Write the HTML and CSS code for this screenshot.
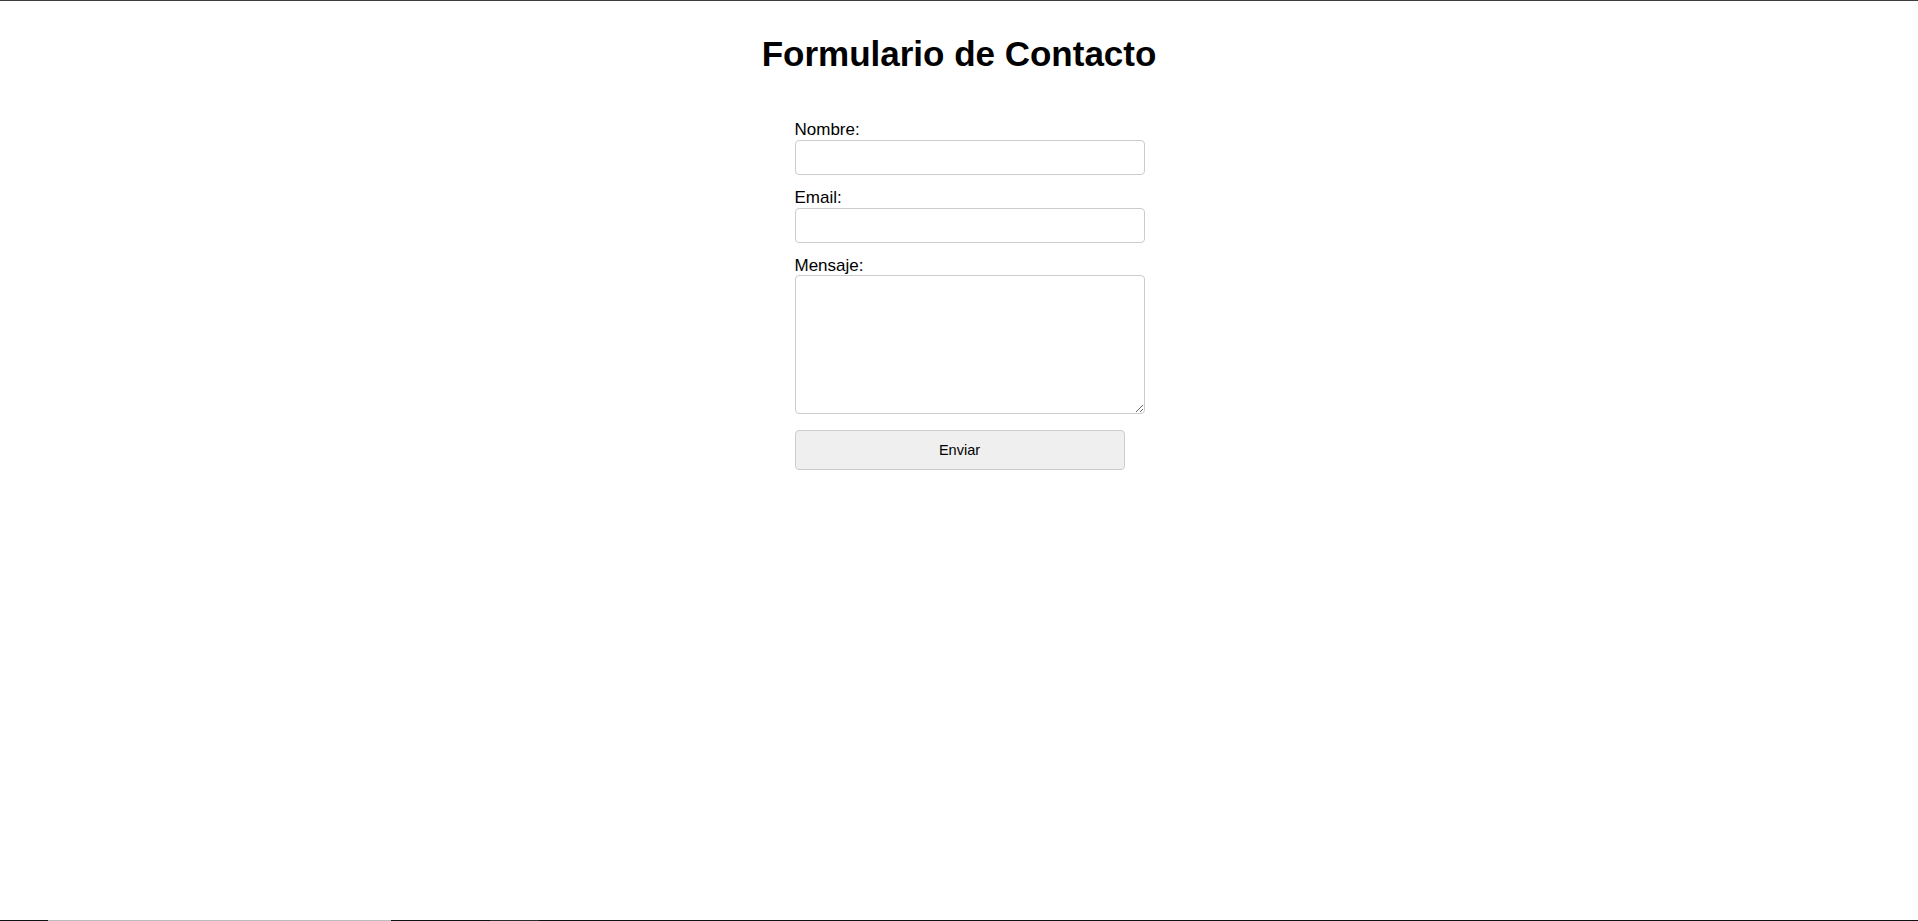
FILE: index.html
```html
<!DOCTYPE html>
<html lang="es">
<head>
<meta charset="utf-8">
<title>Formulario de Contacto</title>
<link rel="stylesheet" href="styles.css">
</head>
<body>
<h1 class="title">Formulario de Contacto</h1>
<form class="contact-form">
  <label class="field-label" for="nombre">Nombre:</label>
  <input class="field-input" type="text" id="nombre" name="nombre">
  <label class="field-label" for="email">Email:</label>
  <input class="field-input" type="email" id="email" name="email">
  <label class="field-label" for="mensaje">Mensaje:</label>
  <textarea class="field-input field-area" id="mensaje" name="mensaje"></textarea>
  <button class="submit-btn" type="submit">Enviar</button>
</form>
</body>
</html>
```
FILE: styles.css
```css
html {
  height: 100%;
  background:
    linear-gradient(#3d3d3d, #3d3d3d) top left / 100% 1px no-repeat,
    linear-gradient(to right,
      #111 0, #111 48px,
      #bdbdbd 48px, #bdbdbd 391px,
      #111 391px, #111 490px,
      #2e2e2e 490px, #2e2e2e 539px,
      #111 539px, #111 100%) bottom left / 100% 1px no-repeat,
    #fff;
}

body {
  margin: 8px;
  font-family: "Liberation Sans", Arial, sans-serif;
  color: #000;
}

.title {
  margin: 26px 0 0;
  font-size: 35px;
  font-weight: bold;
  text-align: center;
  line-height: 40px;
}

.contact-form {
  width: 330px;
  margin: 43px auto 0;
  padding-left: 1px;
}

.field-label {
  display: block;
  font-size: 17px;
  line-height: 20px;
  padding-top: 3px;
  margin-bottom: 0;
}

.field-input {
  display: block;
  width: 100%;
  height: 15px;
  padding: 9px;
  margin: 0 0 10px;
  border: 1px solid #cccccc;
  border-radius: 4px;
  font-family: "Liberation Sans", Arial, sans-serif;
  font-size: 14px;
  background: #fff;
  box-sizing: content-box;
}

.field-area {
  height: 119px;
  margin-top: -1px;
  margin-bottom: 16px;
  resize: both;
}

.submit-btn {
  display: block;
  width: 330px;
  height: 40px;
  background: #efefef;
  border: 1px solid #cccccc;
  border-radius: 4px;
  font-family: "Liberation Sans", Arial, sans-serif;
  font-size: 14.5px;
  color: #000;
}
```
